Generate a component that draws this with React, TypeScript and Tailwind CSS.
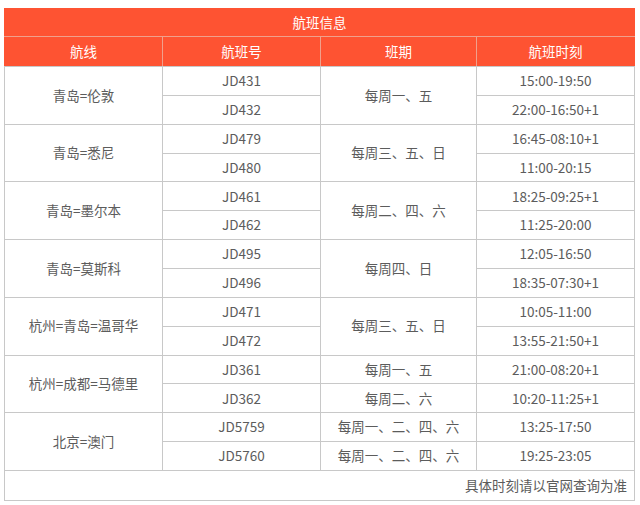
import React from "react";

type Row = { flight: string; days?: string; time: string };
type Group = { route: string; days?: string; rows: Row[] };

const groups: Group[] = [
  { route: "青岛=伦敦", days: "每周一、五", rows: [{ flight: "JD431", time: "15:00-19:50" }, { flight: "JD432", time: "22:00-16:50+1" }] },
  { route: "青岛=悉尼", days: "每周三、五、日", rows: [{ flight: "JD479", time: "16:45-08:10+1" }, { flight: "JD480", time: "11:00-20:15" }] },
  { route: "青岛=墨尔本", days: "每周二、四、六", rows: [{ flight: "JD461", time: "18:25-09:25+1" }, { flight: "JD462", time: "11:25-20:00" }] },
  { route: "青岛=莫斯科", days: "每周四、日", rows: [{ flight: "JD495", time: "12:05-16:50" }, { flight: "JD496", time: "18:35-07:30+1" }] },
  { route: "杭州=青岛=温哥华", days: "每周三、五、日", rows: [{ flight: "JD471", time: "10:05-11:00" }, { flight: "JD472", time: "13:55-21:50+1" }] },
  { route: "杭州=成都=马德里", rows: [{ flight: "JD361", days: "每周一、五", time: "21:00-08:20+1" }, { flight: "JD362", days: "每周二、六", time: "10:20-11:25+1" }] },
  { route: "北京=澳门", rows: [{ flight: "JD5759", days: "每周一、二、四、六", time: "13:25-17:50" }, { flight: "JD5760", days: "每周一、二、四、六", time: "19:25-23:05" }] },
];

const td = "border border-[#c8c8c8] text-center align-middle p-0";

export default function App() {
  return (
    <div className="w-[640px] h-[505px] bg-white pt-[8px] pl-[4px]" style={{ fontFamily: '"Noto Sans CJK SC", "Noto Sans", sans-serif' }}>
      <table className="w-[630px] table-fixed border-collapse text-[13.5px] text-[#5c5c5c] leading-none">
        <colgroup>
          <col className="w-[158px]" />
          <col className="w-[158px]" />
          <col className="w-[156px]" />
          <col className="w-[158px]" />
        </colgroup>
        <thead>
          <tr className="h-[28px] bg-[#fe5332]">
            <th colSpan={4} className="border border-[#f0a08c] border-t-[#fe5332] border-x-[#fe5332] font-normal text-white text-center">航班信息</th>
          </tr>
          <tr className="h-[30px] bg-[#fe5332]">
            <th className="border border-[#f0a08c] border-l-[#fe5332] border-b-[#c8c8c8] font-normal text-white">航线</th>
            <th className="border border-[#f0a08c] border-b-[#c8c8c8] font-normal text-white">航班号</th>
            <th className="border border-[#f0a08c] border-b-[#c8c8c8] font-normal text-white">班期</th>
            <th className="border border-[#f0a08c] border-r-[#fe5332] border-b-[#c8c8c8] font-normal text-white">航班时刻</th>
          </tr>
        </thead>
        <tbody>
          {groups.map((g) =>
            g.rows.map((r, i) => (
              <tr key={r.flight} className="h-[28.86px]">
                {i === 0 && (
                  <td rowSpan={2} className={td}>{g.route}</td>
                )}
                <td className={td}>{r.flight}</td>
                {g.days ? (
                  i === 0 && <td rowSpan={2} className={td}>{g.days}</td>
                ) : (
                  <td className={td}>{r.days}</td>
                )}
                <td className={td}>{r.time}</td>
              </tr>
            ))
          )}
          <tr className="h-[30px]">
            <td colSpan={4} className="border border-[#c8c8c8] text-right pr-[7px] align-middle">具体时刻请以官网查询为准</td>
          </tr>
        </tbody>
      </table>
    </div>
  );
}
